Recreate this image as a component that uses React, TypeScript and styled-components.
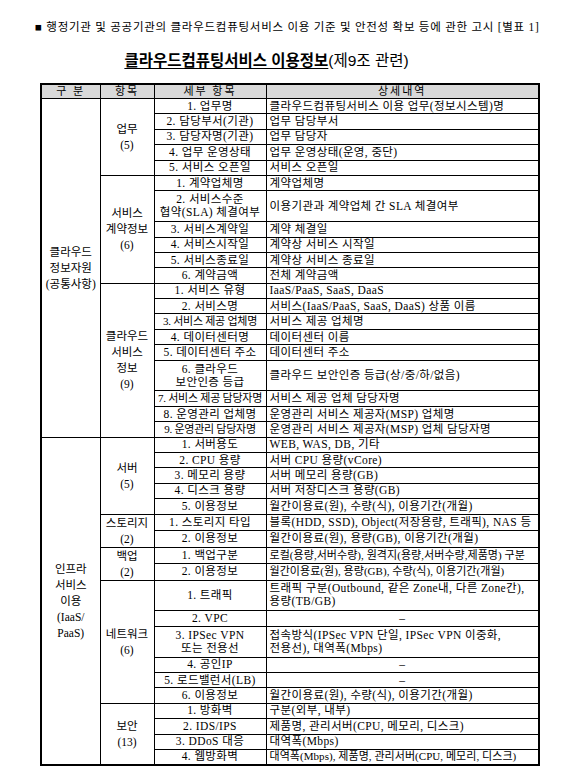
import React, { Fragment } from 'react';
import styled, { createGlobalStyle } from 'styled-components';

const GlobalStyle = createGlobalStyle`
  body {
    margin: 0;
    background: #fff;
    color: #000;
    font-family: "Liberation Serif", "Noto Sans CJK KR", serif;
  }
`;

const Page = styled.div`
  width: 573px;
  padding-top: 20px;
`;

const Notice = styled.p`
  margin: 0 0 0 35px;
  font-size: 11.5px;
  line-height: 14px;
  letter-spacing: 0.75px;
  white-space: nowrap;
`;

const Title = styled.h1`
  margin: 17px 0 0;
  padding-right: 40px;
  text-align: center;
  font-family: "Liberation Sans", "Noto Sans CJK KR", sans-serif;
  font-size: 15.5px;
  font-weight: 400;
  line-height: 20px;
`;

const TitleMain = styled.span`
  font-weight: 700;
  text-decoration: underline;
  text-underline-offset: 2px;
`;

const Table = styled.table`
  margin: 12px 0 0 40px;
  width: 498px;
  table-layout: fixed;
  border-collapse: collapse;
  border: 2px solid #000;
`;

const HeadCell = styled.th`
  height: 13px;
  padding: 0;
  border: 1px solid #000;
  background: #d9d9d9;
  font-size: 11px;
  font-weight: 400;
  line-height: 13px;
  letter-spacing: 2px;
`;

const Row = styled.tr<{ $double?: boolean }>`
  height: ${({ $double }) => ($double ? 30.8 : 15.4)}px;
`;

const GroupCell = styled.td`
  padding: 0;
  border: 1px solid #000;
  text-align: center;
  vertical-align: middle;
  font-size: 11.5px;
  line-height: 16px;
  white-space: nowrap;
`;

type Fit = 'normal' | 'snug' | 'tight';

const fitSpacing: Record<Fit, number> = { normal: 0.4, snug: 0.05, tight: -0.25 };

const Cell = styled.td<{ $align?: 'left' | 'center'; $fit?: Fit }>`
  padding: 0 3px;
  border: 1px solid #000;
  text-align: ${({ $align }) => $align ?? 'left'};
  vertical-align: middle;
  font-size: ${({ $fit }) => ($fit && $fit !== 'normal' ? 11 : 11.5)}px;
  letter-spacing: ${({ $fit }) => fitSpacing[$fit ?? 'normal']}px;
  line-height: 13px;
  white-space: nowrap;
  overflow: hidden;
`;

type Text = string | string[];

type Item = {
  label: Text;
  detail: Text;
  double?: boolean;
  labelFit?: Fit;
  detailFit?: Fit;
  centerDetail?: boolean;
};

type Category = { name: string[]; items: Item[] };
type Division = { name: string[]; categories: Category[] };

const divisions: Division[] = [
  {
    name: ['클라우드', '정보자원', '(공통사항)'],
    categories: [
      {
        name: ['업무', '(5)'],
        items: [
          { label: '1. 업무명', detail: '클라우드컴퓨팅서비스 이용 업무(정보시스템)명' },
          { label: '2. 담당부서(기관)', detail: '업무 담당부서' },
          { label: '3. 담당자명(기관)', detail: '업무 담당자' },
          { label: '4. 업무 운영상태', detail: '업무 운영상태(운영, 중단)' },
          { label: '5. 서비스 오픈일', detail: '서비스 오픈일' },
        ],
      },
      {
        name: ['서비스', '계약정보', '(6)'],
        items: [
          { label: '1. 계약업체명', detail: '계약업체명' },
          { label: ['2. 서비스수준', '협약(SLA) 체결여부'], detail: '이용기관과 계약업체 간 SLA 체결여부', double: true },
          { label: '3. 서비스계약일', detail: '계약 체결일' },
          { label: '4. 서비스시작일', detail: '계약상 서비스 시작일' },
          { label: '5. 서비스종료일', detail: '계약상 서비스 종료일' },
          { label: '6. 계약금액', detail: '전체 계약금액' },
        ],
      },
      {
        name: ['클라우드', '서비스', '정보', '(9)'],
        items: [
          { label: '1. 서비스 유형', detail: 'IaaS/PaaS, SaaS, DaaS' },
          { label: '2. 서비스명', detail: '서비스(IaaS/PaaS, SaaS, DaaS) 상품 이름' },
          { label: '3. 서비스 제공 업체명', detail: '서비스 제공 업체명', labelFit: 'tight' },
          { label: '4. 데이터센터명', detail: '데이터센터 이름' },
          { label: '5. 데이터센터 주소', detail: '데이터센터 주소' },
          { label: ['6. 클라우드', '보안인증 등급'], detail: '클라우드 보안인증 등급(상/중/하/없음)', double: true },
          { label: '7. 서비스 제공 담당자명', detail: '서비스 제공 업체 담당자명', labelFit: 'tight' },
          { label: '8. 운영관리 업체명', detail: '운영관리 서비스 제공자(MSP) 업체명' },
          { label: '9. 운영관리 담당자명', detail: '운영관리 서비스 제공자(MSP) 업체 담당자명', labelFit: 'tight' },
        ],
      },
    ],
  },
  {
    name: ['인프라', '서비스', '이용', '(IaaS/', 'PaaS)'],
    categories: [
      {
        name: ['서버', '(5)'],
        items: [
          { label: '1. 서버용도', detail: 'WEB, WAS, DB, 기타' },
          { label: '2. CPU 용량', detail: '서버 CPU 용량(vCore)' },
          { label: '3. 메모리 용량', detail: '서버 메모리 용량(GB)' },
          { label: '4. 디스크 용량', detail: '서버 저장디스크 용량(GB)' },
          { label: '5. 이용정보', detail: '월간이용료(원), 수량(식), 이용기간(개월)' },
        ],
      },
      {
        name: ['스토리지', '(2)'],
        items: [
          { label: '1. 스토리지 타입', detail: '블록(HDD, SSD), Object(저장용량, 트래픽), NAS 등' },
          { label: '2. 이용정보', detail: '월간이용료(원), 용량(GB), 이용기간(개월)' },
        ],
      },
      {
        name: ['백업', '(2)'],
        items: [
          { label: '1. 백업구분', detail: '로컬(용량,서버수량), 원격지(용량,서버수량,제품명) 구분', detailFit: 'snug' },
          { label: '2. 이용정보', detail: '월간이용료(원), 용량(GB), 수량(식), 이용기간(개월)', detailFit: 'snug' },
        ],
      },
      {
        name: ['네트워크', '(6)'],
        items: [
          { label: '1. 트래픽', detail: ['트래픽 구분(Outbound, 같은 Zone내, 다른 Zone간),', '용량(TB/GB)'], double: true },
          { label: '2. VPC', detail: '–', centerDetail: true },
          { label: ['3. IPSec VPN', '또는 전용선'], detail: ['접속방식(IPSec VPN 단일, IPSec VPN 이중화,', '전용선), 대역폭(Mbps)'], double: true },
          { label: '4. 공인IP', detail: '–', centerDetail: true },
          { label: '5. 로드밸런서(LB)', detail: '–', centerDetail: true },
          { label: '6. 이용정보', detail: '월간이용료(원), 수량(식), 이용기간(개월)' },
        ],
      },
      {
        name: ['보안', '(13)'],
        items: [
          { label: '1. 방화벽', detail: '구분(외부, 내부)' },
          { label: '2. IDS/IPS', detail: '제품명, 관리서버(CPU, 메모리, 디스크)' },
          { label: '3. DDoS 대응', detail: '대역폭(Mbps)' },
          { label: '4. 웹방화벽', detail: '대역폭(Mbps), 제품명, 관리서버(CPU, 메모리, 디스크)', detailFit: 'snug' },
        ],
      },
    ],
  },
];

const Lines = ({ text }: { text: Text }) => {
  const lines = Array.isArray(text) ? text : [text];
  return (
    <>
      {lines.map((line, i) => (
        <Fragment key={i}>
          {i > 0 && <br />}
          {line}
        </Fragment>
      ))}
    </>
  );
};

const App = () => (
  <Page>
    <GlobalStyle />
    <Notice>■ 행정기관 및 공공기관의 클라우드컴퓨팅서비스 이용 기준 및 안전성 확보 등에 관한 고시 [별표 1]</Notice>
    <Title>
      <TitleMain>클라우드컴퓨팅서비스 이용정보</TitleMain>(제9조 관련)
    </Title>
    <Table>
      <colgroup>
        <col style={{ width: 59 }} />
        <col style={{ width: 54 }} />
        <col style={{ width: 112 }} />
        <col style={{ width: 273 }} />
      </colgroup>
      <thead>
        <tr>
          <HeadCell>구 분</HeadCell>
          <HeadCell>항목</HeadCell>
          <HeadCell>세부 항목</HeadCell>
          <HeadCell>상세내역</HeadCell>
        </tr>
      </thead>
      <tbody>
        {divisions.map((division, d) => {
          const total = division.categories.reduce((n, c) => n + c.items.length, 0);
          return division.categories.map((category, c) =>
            category.items.map((item, i) => (
              <Row key={`${d}-${c}-${i}`} $double={item.double}>
                {c === 0 && i === 0 && (
                  <GroupCell rowSpan={total}>
                    <Lines text={division.name} />
                  </GroupCell>
                )}
                {i === 0 && (
                  <GroupCell rowSpan={category.items.length}>
                    <Lines text={category.name} />
                  </GroupCell>
                )}
                <Cell $align="center" $fit={item.labelFit}>
                  <Lines text={item.label} />
                </Cell>
                <Cell $align={item.centerDetail ? 'center' : 'left'} $fit={item.detailFit}>
                  <Lines text={item.detail} />
                </Cell>
              </Row>
            ))
          );
        })}
      </tbody>
    </Table>
  </Page>
);

export default App;
